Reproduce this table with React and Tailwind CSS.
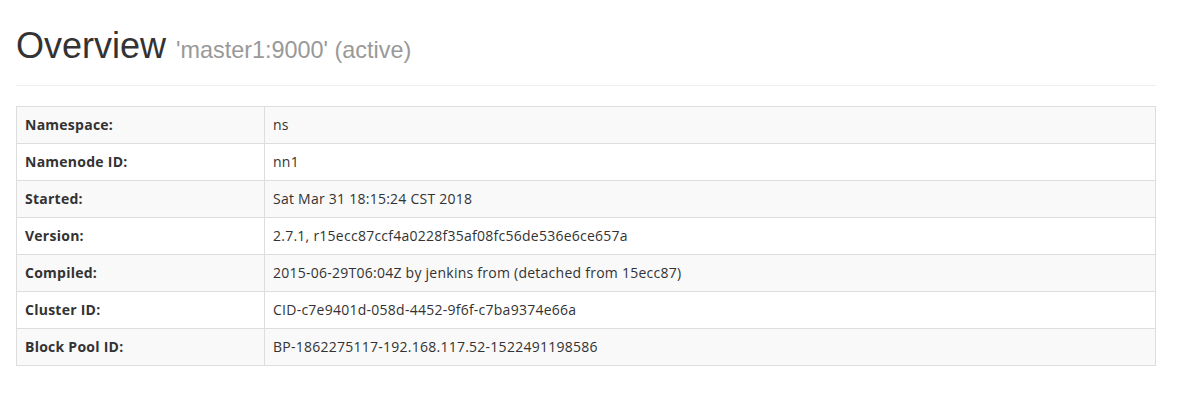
import React from "react";

const rows = [
  ["Namespace:", "ns"],
  ["Namenode ID:", "nn1"],
  ["Started:", "Sat Mar 31 18:15:24 CST 2018"],
  ["Version:", "2.7.1, r15ecc87ccf4a0228f35af08fc56de536e6ce657a"],
  ["Compiled:", "2015-06-29T06:04Z by jenkins from (detached from 15ecc87)"],
  ["Cluster ID:", "CID-c7e9401d-058d-4452-9f6f-c7ba9374e66a"],
  ["Block Pool ID:", "BP-1862275117-192.168.117.52-1522491198586"],
];

const App = () => {
  return (
    <div className="min-h-screen bg-white text-[#333] pt-[26px]">
      <div className="w-[1140px] ml-4">
        {/* Page header */}
        <div className="pb-[9px] border-b border-[#eee] mb-5">
          <h1 className="mt-0 mb-[10px] text-[36px] leading-[1.1] font-['Liberation_Sans',Arial,sans-serif]">
            Overview{" "}
            <small className="text-[65%] text-[#999]">'master1:9000' (active)</small>
          </h1>
        </div>

        {/* Overview table */}
        <table className="w-full border-collapse border border-[#ddd] text-[14px] leading-5 tracking-[0.25px] font-['Open_Sans',sans-serif]">
          <tbody>
            {rows.map(([label, value], i) => (
              <tr key={label} className={i % 2 === 0 ? "bg-[#f9f9f9]" : "bg-white"}>
                <th className="w-[248px] border border-[#ddd] p-2 text-left font-bold">{label}</th>
                <td className="border border-[#ddd] p-2">{value}</td>
              </tr>
            ))}
          </tbody>
        </table>
      </div>
    </div>
  );
};

export default App;
